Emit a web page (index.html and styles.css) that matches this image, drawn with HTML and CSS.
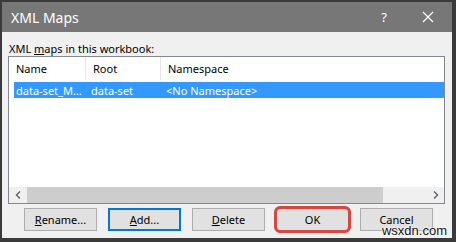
FILE: index.html
```html
<!DOCTYPE html>
<html lang="en">
<head>
    <meta charset="UTF-8">
    <title>XML Maps</title>
    <link rel="stylesheet" href="styles.css">
</head>
<body>
    <div class="window">
        <div class="titlebar">
            <div class="title">XML Maps</div>
            <div class="title-btn help">?</div>
            <div class="title-btn close">
                <svg width="12" height="12" viewBox="0 0 12 12">
                    <path d="M1 1 L11 11 M11 1 L1 11" stroke="#fff" stroke-width="1.2"/>
                </svg>
            </div>
        </div>

        <div class="content">
            <div class="label">XML <u>m</u>aps in this workbook:</div>

            <div class="list">
                <div class="list-head">
                    <div class="col">Name</div>
                    <div class="col">Root</div>
                    <div class="col last">Namespace</div>
                </div>
                <div class="list-row selected">
                    <div class="col">data-set_M...</div>
                    <div class="col">data-set</div>
                    <div class="col last">&lt;No Namespace&gt;</div>
                </div>
                <div class="list-space"></div>
                <div class="hscroll">
                    <div class="arrow">
                        <svg width="6" height="8" viewBox="0 0 6 8"><path d="M5 0.5 L1.5 4 L5 7.5" stroke="#606060" stroke-width="1.4" fill="none"/></svg>
                    </div>
                    <div class="track"><div class="thumb"></div></div>
                    <div class="arrow">
                        <svg width="6" height="8" viewBox="0 0 6 8"><path d="M1 0.5 L4.5 4 L1 7.5" stroke="#606060" stroke-width="1.4" fill="none"/></svg>
                    </div>
                </div>
            </div>

            <div class="buttons">
                <button class="btn"><u>R</u>ename...</button>
                <button class="btn default"><u>A</u>dd...</button>
                <button class="btn"><u>D</u>elete</button>
                <button class="btn marked">OK</button>
                <button class="btn">Cancel</button>
            </div>
        </div>

        <div class="watermark">wsxdn.com</div>
    </div>
</body>
</html>
```

FILE: styles.css
```css
* { margin: 0; padding: 0; box-sizing: border-box; }
body {
    font-family: "Noto Sans", "Open Sans", sans-serif;
    font-size: 11px; color: #000; background: #2b2b2b;
}
.window {
    position: relative; width: 456px; height: 242px;
    border: 2px solid #3a3a3a; border-right-width: 4px; border-bottom-width: 4px;
    background: #f0f0f0; display: flex; flex-direction: column;
}
.titlebar {
    height: 30px; background: #777777; color: #fff;
    display: flex; align-items: center; padding-left: 9px;
}
.title { font-size: 14px; flex: 1; }
.title-btn { display: flex; align-items: center; justify-content: center; height: 30px; }
.help { width: 20px; font-size: 13px; margin-right: 24px; }
.close { width: 20px; margin-right: 14px; }
.content { flex: 1; padding: 9px 7px 0 6px; display: flex; flex-direction: column; }
.label { height: 15px; line-height: 15px; margin-left: 1px; }
.list {
    height: 148px; background: #fff;
    border: 1px solid #828790; display: flex; flex-direction: column;
}
.list-head { display: flex; height: 23px; align-items: center; }
.col {
    width: 77px; padding-left: 7px; white-space: nowrap; height: 100%;
    border-right: 1px solid #e5e5e5; display: flex; align-items: center;
}
.col + .col { width: 75px; }
.col.last { border-right: none; flex: 1; }
.list-row { display: flex; height: 16px; margin: 2px 0 0 5px; }
.list-row .col { border-right: none; padding-left: 2px; width: 75px; }
.selected { background: #3399ff; color: #fff; }
.list-space { flex: 1; }
.hscroll { height: 16px; display: flex; background: #f0f0f0; }
.arrow { width: 17px; display: flex; align-items: center; justify-content: center; }
.track { flex: 1; display: flex; align-items: center; }
.thumb { width: 356px; height: 16px; background: #cdcdcd; margin-left: 1px; }
.buttons { display: flex; gap: 11px; margin-top: 4px; padding-left: 16px; }
.btn {
    width: 73px; height: 23px; font-family: inherit; font-size: 11px;
    background: #e1e1e1; border: 1px solid #adadad; color: #000;
}
.btn.default { border-color: #0078d7; box-shadow: inset 0 0 0 1px #0078d7; }
.btn.marked { outline: 3px solid #d9463f; outline-offset: -1px; border-radius: 4px; }
.watermark {
    position: absolute; right: 5px; bottom: 1px; line-height: 13px;
    font-family: "Liberation Sans", Arial, sans-serif; font-size: 13px; color: #111;
    text-shadow: 0 0 2px #fff, 0 0 2px #fff, 0 0 2px #fff;
}
```
